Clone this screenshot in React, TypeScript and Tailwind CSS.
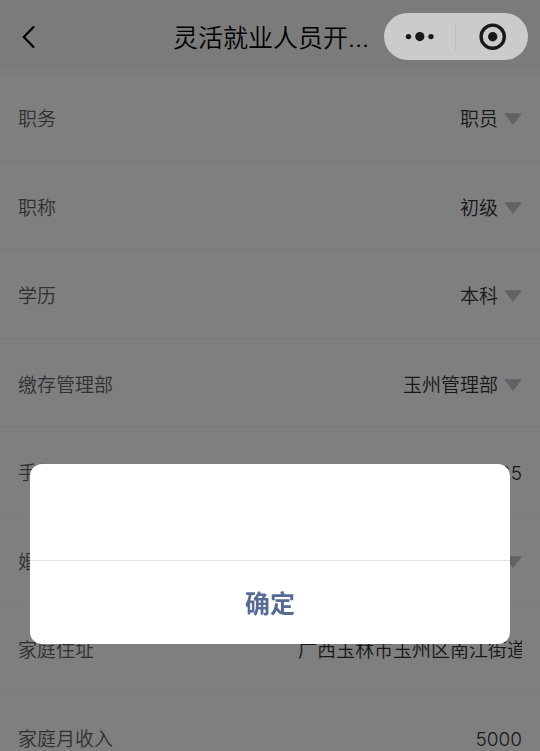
import { useState } from 'react';

type Field = {
  id: string;
  label: string;
  value: string;
  type: 'select' | 'text';
};

const fields: Field[] = [
  { id: 'duty', label: '职务', value: '职员', type: 'select' },
  { id: 'title', label: '职称', value: '初级', type: 'select' },
  { id: 'education', label: '学历', value: '本科', type: 'select' },
  { id: 'department', label: '缴存管理部', value: '玉州管理部', type: 'select' },
  { id: 'phone', label: '手机', value: '25', type: 'text' },
  { id: 'marriage', label: '婚姻状况', value: '未婚', type: 'select' },
  { id: 'address', label: '家庭住址', value: '广西玉林市玉州区南江街道', type: 'text' },
  { id: 'income', label: '家庭月收入', value: '5000', type: 'text' },
];

function Header() {
  return (
    <header className="flex h-[72px] items-center border-b-[3px] border-[#fcfcfc] bg-[#f7f7f7] px-[18px] pt-1">
      <button type="button" aria-label="返回" className="w-[155px] shrink-0">
        <svg width="20" height="26" viewBox="0 0 20 26" fill="none" stroke="#000" strokeWidth="2.2">
          <path d="M16 2.5 L5.8 13 L16 23.5" />
        </svg>
      </button>
      <h1 className="pt-[2px] text-[25px] leading-9 whitespace-nowrap text-black">灵活就业人员开...</h1>
    </header>
  );
}

// Mini program capsule, stays above the mask
function Capsule() {
  return (
    <div className="fixed top-[13px] right-3 z-20 flex h-[47px] w-36 items-center rounded-full bg-[#cbcbcb]">
      <button type="button" aria-label="更多" className="flex h-full w-[71px] items-center justify-center">
        <svg width="30" height="12" viewBox="0 0 30 12" fill="#191919">
          <circle cx="3.5" cy="5.6" r="2.7" />
          <circle cx="14.8" cy="5.6" r="4.6" />
          <circle cx="26" cy="5.6" r="2.7" />
        </svg>
      </button>
      <span className="h-7 w-px bg-[#bfbfbf]" />
      <button type="button" aria-label="关闭" className="flex h-full flex-1 items-center justify-center pl-px">
        <svg width="28" height="28" viewBox="0 0 28 28">
          <circle cx="13.7" cy="13.7" r="11.6" fill="none" stroke="#191919" strokeWidth="3.4" />
          <circle cx="13.7" cy="13.7" r="4.7" fill="#191919" />
        </svg>
      </button>
    </div>
  );
}

function FieldRow({ field }: { field: Field }) {
  const [value, setValue] = useState(field.value);

  return (
    <div className="flex items-center justify-between border-b border-[#f0f0f0] px-[18px] pt-1 odd:h-[89px] even:h-[88px]">
      <label htmlFor={field.id} className="pt-[2px] text-[#606266]">
        {field.label}
      </label>
      {field.type === 'select' ? (
        <div className="flex items-center gap-[6px]">
          <select
            id={field.id}
            value={value}
            onChange={(e) => setValue(e.target.value)}
            className="field-sizing-content appearance-none pt-[2px] text-[#303133]"
          >
            <option>{field.value}</option>
          </select>
          <svg width="18" height="12" viewBox="0 0 18 12" fill="#c0c4cc" stroke="#c0c4cc" strokeLinejoin="round">
            <path d="M1 0.8 H17 L9 11.4 Z" />
          </svg>
        </div>
      ) : (
        <input
          id={field.id}
          value={value}
          onChange={(e) => setValue(e.target.value)}
          className="w-[224px] pt-[2px] text-right text-[#303133]"
        />
      )}
    </div>
  );
}

function ConfirmDialog({ onConfirm }: { onConfirm: () => void }) {
  return (
    <div className="fixed inset-0 z-10 flex items-end bg-black/50 px-[30px] pb-[107px]">
      <div role="dialog" aria-label="提示" className="w-full overflow-hidden rounded-xl bg-white">
        <div className="h-24" />
        <button
          type="button"
          onClick={onConfirm}
          className="h-[84px] w-full border-t border-[#e0e0e0] pt-[2px] text-[25px] font-bold text-[#576b95]"
        >
          确定
        </button>
      </div>
    </div>
  );
}

export default function App() {
  const [open, setOpen] = useState(true);

  return (
    <div className="h-screen overflow-hidden bg-white font-['Inter','Noto_Sans_CJK_SC',sans-serif] text-[19px] leading-7 font-[350]">
      <Header />
      <Capsule />
      <form className="border-t border-[#f0f0f0]">
        {fields.map((field) => (
          <FieldRow key={field.id} field={field} />
        ))}
      </form>
      {open && <ConfirmDialog onConfirm={() => setOpen(false)} />}
    </div>
  );
}
